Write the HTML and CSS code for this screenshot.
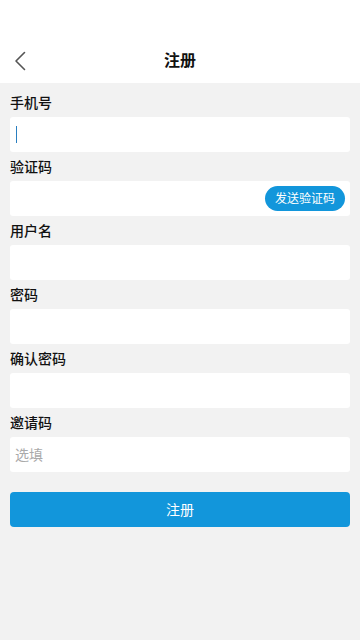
FILE: index.html
```html
<!DOCTYPE html>
<html lang="zh-CN">
<head>
<meta charset="utf-8">
<meta name="viewport" content="width=360, initial-scale=1">
<title>注册</title>
<link rel="stylesheet" href="styles.css">
</head>
<body>
<div class="page">
  <header class="topbar">
    <button class="back" aria-label="返回">
      <svg width="12" height="20" viewBox="0 0 12 20"><path d="M10.5 1.5 L2 10 L10.5 18.5" fill="none" stroke="#555" stroke-width="1.6" stroke-linecap="round" stroke-linejoin="round"/></svg>
    </button>
    <h1 class="title">注册</h1>
  </header>
  <main class="form">
    <div class="field">
      <div class="label">手机号</div>
      <div class="box"><span class="caret"></span></div>
    </div>
    <div class="field">
      <div class="label">验证码</div>
      <div class="box box-code"><span class="send">发送验证码</span></div>
    </div>
    <div class="field">
      <div class="label">用户名</div>
      <div class="box"></div>
    </div>
    <div class="field">
      <div class="label">密码</div>
      <div class="box"></div>
    </div>
    <div class="field">
      <div class="label">确认密码</div>
      <div class="box"></div>
    </div>
    <div class="field">
      <div class="label">邀请码</div>
      <div class="box"><span class="placeholder">选填</span></div>
    </div>
    <button class="submit"><span>注册</span></button>
  </main>
</div>
</body>
</html>
```
FILE: styles.css
```css
* { box-sizing: border-box; }
html, body { margin: 0; padding: 0; }
body {
  width: 360px;
  height: 640px;
  background: #f2f2f2;
  font-family: "Noto Sans CJK SC", "Noto Sans", sans-serif;
  color: #111;
}
.page { min-height: 640px; background: #f2f2f2; }
.topbar {
  height: 83px;
  background: #fff;
  display: flex;
  align-items: center;
  justify-content: center;
  position: relative;
  padding-top: 35px;
}
.back {
  position: absolute;
  left: 14px;
  top: 51px;
  width: 14px;
  height: 20px;
  padding: 0;
  border: 0;
  background: none;
  display: flex;
}
.title {
  margin: 0;
  font-size: 16px;
  font-weight: 700;
  line-height: 20px;
  color: #111;
}
.form {
  padding: 5px 10px 0;
  display: flex;
  flex-direction: column;
}
.field { display: flex; flex-direction: column; }
.label {
  font-size: 14px;
  font-weight: 500;
  line-height: 22px;
  padding-top: 3px;
  margin-bottom: 4px;
  color: #111;
}
.box {
  height: 35px;
  background: #fff;
  border-radius: 3px;
  display: flex;
  align-items: center;
  padding: 0 5px;
}
.box-code { justify-content: flex-end; }
.caret {
  display: block;
  width: 1px;
  height: 17px;
  background: #2a7fc0;
  margin-left: 1px;
}
.send {
  width: 80px;
  height: 25px;
  border-radius: 13px;
  background: #1296db;
  color: #fff;
  font-size: 12px;
  line-height: 24px;
  text-align: center;
}
.placeholder {
  font-size: 14px;
  line-height: 20px;
  margin-top: -2px;
  color: #aaa;
}
.submit {
  margin-top: 20px;
  height: 35px;
  border: 0;
  border-radius: 4px;
  background: #1296db;
  color: #fff;
  font-family: inherit;
  font-size: 14px;
  line-height: 20px;
  padding: 0 0 2px;
}
```
